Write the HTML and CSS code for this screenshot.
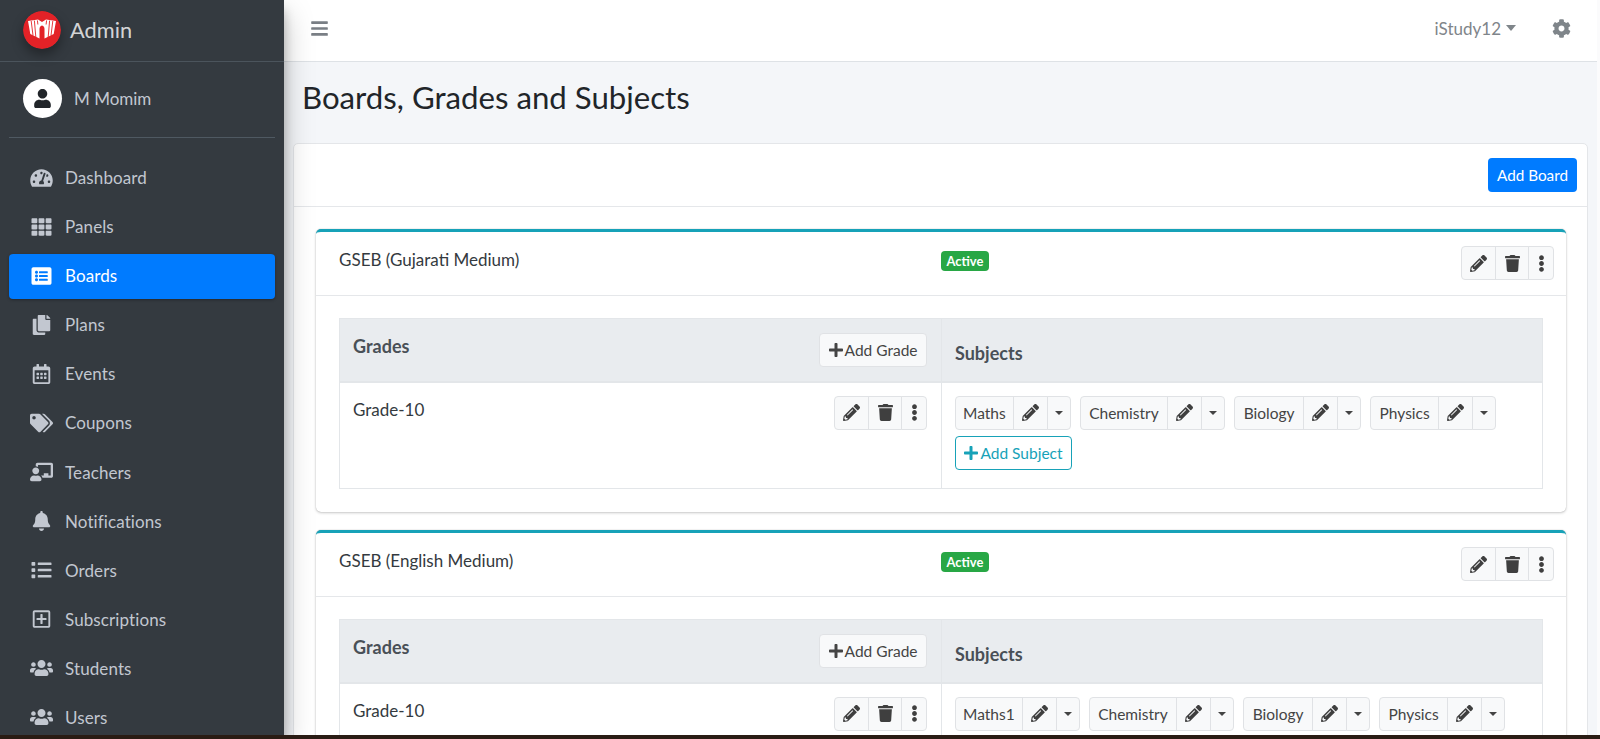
FILE: index.html
```html
<!DOCTYPE html>
<html lang="en">
<head>
<meta charset="utf-8">
<title>Boards, Grades and Subjects</title>
<link rel="stylesheet" href="styles.css">
</head>
<body>
<svg class="sprite" xmlns="http://www.w3.org/2000/svg">
<symbol id="i-pencil" viewBox="0 0 512 512"><path d="M497.9 142.1l-46.1 46.1c-4.7 4.7-12.3 4.7-17 0l-111-111c-4.7-4.7-4.7-12.3 0-17l46.1-46.1c18.7-18.7 49.1-18.7 67.9 0l60.1 60.1c18.8 18.7 18.8 49.1 0 67.9zM284.2 99.8L21.6 362.4.4 483.9c-2.9 16.4 11.4 30.6 27.8 27.8l121.5-21.3 262.6-262.6c4.7-4.7 4.7-12.3 0-17l-111-111c-4.8-4.7-12.4-4.7-17.1 0zM124.1 339.9c-5.5-5.5-5.5-14.3 0-19.8l154-154c5.5-5.5 14.3-5.5 19.8 0s5.5 14.3 0 19.8l-154 154c-5.5 5.5-14.3 5.5-19.8 0zM88 424h48v36.3l-64.5 11.3-31.1-31.1L51.7 376H88v48z"/></symbol>
<symbol id="i-trash" viewBox="0 0 448 512"><path d="M432 32H312l-9.4-18.7A24 24 0 0 0 281.1 0H166.8a23.72 23.72 0 0 0-21.4 13.3L136 32H16A16 16 0 0 0 0 48v32a16 16 0 0 0 16 16h416a16 16 0 0 0 16-16V48a16 16 0 0 0-16-16zM53.2 467a48 48 0 0 0 47.9 45h245.8a48 48 0 0 0 47.9-45L416 128H32z"/></symbol>
<symbol id="i-more" viewBox="0 0 192 512"><path d="M96 184c39.8 0 72 32.2 72 72s-32.2 72-72 72-72-32.2-72-72 32.2-72 72-72zM24 80c0 39.8 32.2 72 72 72s72-32.2 72-72S135.8 8 96 8 24 40.2 24 80zm0 352c0 39.8 32.2 72 72 72s72-32.2 72-72-32.2-72-72-72-72 32.2-72 72z"/></symbol>
<symbol id="i-plus" viewBox="0 0 448 512"><path d="M416 208H272V64c0-17.67-14.33-32-32-32h-32c-17.67 0-32 14.33-32 32v144H32c-17.67 0-32 14.33-32 32v32c0 17.67 14.33 32 32 32h144v144c0 17.67 14.33 32 32 32h32c17.67 0 32-14.33 32-32V304h144c17.67 0 32-14.33 32-32v-32c0-17.67-14.33-32-32-32z"/></symbol>
<symbol id="i-bars" viewBox="0 0 448 512"><path d="M16 132h416c8.837 0 16-7.163 16-16V76c0-8.837-7.163-16-16-16H16C7.163 60 0 67.163 0 76v40c0 8.837 7.163 16 16 16zm0 160h416c8.837 0 16-7.163 16-16v-40c0-8.837-7.163-16-16-16H16c-8.837 0-16 7.163-16 16v40c0 8.837 7.163 16 16 16zm0 160h416c8.837 0 16-7.163 16-16v-40c0-8.837-7.163-16-16-16H16c-8.837 0-16 7.163-16 16v40c0 8.837 7.163 16 16 16z"/></symbol>
<symbol id="i-cog" viewBox="0 0 512 512"><path d="M487.4 315.7l-42.6-24.6c4.3-23.2 4.3-47 0-70.2l42.6-24.6c4.9-2.8 7.1-8.6 5.5-14-11.1-35.6-30-67.8-54.7-94.6-3.8-4.1-10-5.1-14.8-2.3L380.8 110c-17.9-15.4-38.5-27.3-60.8-35.1V25.8c0-5.6-3.9-10.5-9.4-11.7-36.7-8.2-74.3-7.8-109.2 0-5.5 1.2-9.4 6.1-9.4 11.7V75c-22.2 7.9-42.8 19.8-60.8 35.1L88.7 85.5c-4.9-2.8-11-1.9-14.8 2.3-24.7 26.7-43.6 58.9-54.7 94.6-1.7 5.4.6 11.2 5.5 14L67.3 221c-4.3 23.2-4.3 47 0 70.2l-42.6 24.6c-4.9 2.8-7.1 8.6-5.5 14 11.1 35.6 30 67.8 54.7 94.6 3.8 4.1 10 5.1 14.8 2.3l42.6-24.6c17.9 15.4 38.5 27.3 60.8 35.1v49.2c0 5.6 3.9 10.5 9.4 11.7 36.7 8.2 74.3 7.8 109.2 0 5.5-1.2 9.4-6.1 9.4-11.7v-49.2c22.2-7.9 42.8-19.8 60.8-35.1l42.6 24.6c4.9 2.8 11 1.9 14.8-2.3 24.7-26.7 43.6-58.9 54.7-94.6 1.5-5.5-.7-11.3-5.6-14.1zM256 336c-44.1 0-80-35.9-80-80s35.9-80 80-80 80 35.9 80 80-35.9 80-80 80z"/></symbol>
<symbol id="i-user" viewBox="0 0 448 512"><path d="M224 256c70.7 0 128-57.3 128-128S294.7 0 224 0 96 57.3 96 128s57.3 128 128 128zm89.6 32h-16.7c-22.2 10.2-46.9 16-72.9 16s-50.6-5.8-72.9-16h-16.7C60.2 288 0 348.2 0 422.4V464c0 26.5 21.5 48 48 48h352c26.5 0 48-21.5 48-48v-41.6c0-74.2-60.2-134.4-134.4-134.4z"/></symbol>
<symbol id="i-dash" viewBox="0 0 576 512"><path d="M288 32C128.94 32 0 160.94 0 320c0 52.8 14.25 102.26 39.06 144.8 5.61 9.62 16.3 15.2 27.44 15.2h443c11.14 0 21.83-5.58 27.44-15.2C561.75 422.26 576 372.8 576 320c0-159.06-128.94-288-288-288zm0 64c14.71 0 26.58 10.13 30.32 23.65-1.11 2.26-2.64 4.23-3.45 6.67l-9.22 27.67c-5.13 3.49-10.97 6.01-17.64 6.01-17.67 0-32-14.33-32-32S270.33 96 288 96zM96 384c-17.67 0-32-14.33-32-32s14.33-32 32-32 32 14.33 32 32-14.33 32-32 32zm48-160c-17.67 0-32-14.33-32-32s14.33-32 32-32 32 14.33 32 32-14.33 32-32 32zm246.77-72.41l-61.33 184C343.13 347.33 352 364.54 352 384c0 11.72-3.38 22.55-8.88 32H232.88c-5.5-9.45-8.88-20.28-8.88-32 0-33.94 26.5-61.43 59.9-63.59l61.34-184.01c4.17-12.56 17.73-19.45 30.36-15.17 12.57 4.19 19.35 17.79 15.17 30.36zm14.66 57.2l15.52-46.55c3.47-1.29 7.13-2.23 11.05-2.23 17.67 0 32 14.33 32 32s-14.33 32-32 32c-11.38-.01-20.89-6.28-26.57-15.22zM480 384c-17.67 0-32-14.33-32-32s14.33-32 32-32 32 14.33 32 32-14.33 32-32 32z"/></symbol>
<symbol id="i-th" viewBox="0 0 512 512"><path d="M149.333 56v80c0 13.255-10.745 24-24 24H24c-13.255 0-24-10.745-24-24V56c0-13.255 10.745-24 24-24h101.333c13.255 0 24 10.745 24 24zm181.334 240v-80c0-13.255-10.745-24-24-24H205.333c-13.255 0-24 10.745-24 24v80c0 13.255 10.745 24 24 24h101.333c13.256 0 24.001-10.745 24.001-24zm32-240v80c0 13.255 10.745 24 24 24H488c13.255 0 24-10.745 24-24V56c0-13.255-10.745-24-24-24H386.667c-13.255 0-24 10.745-24 24zm-32 80V56c0-13.255-10.745-24-24-24H205.333c-13.255 0-24 10.745-24 24v80c0 13.255 10.745 24 24 24h101.333c13.256 0 24.001-10.745 24.001-24zm-205.334 56H24c-13.255 0-24 10.745-24 24v80c0 13.255 10.745 24 24 24h101.333c13.255 0 24-10.745 24-24v-80c0-13.255-10.745-24-24-24zM0 376v80c0 13.255 10.745 24 24 24h101.333c13.255 0 24-10.745 24-24v-80c0-13.255-10.745-24-24-24H24c-13.255 0-24 10.745-24 24zm386.667-56H488c13.255 0 24-10.745 24-24v-80c0-13.255-10.745-24-24-24H386.667c-13.255 0-24 10.745-24 24v80c0 13.255 10.745 24 24 24zm0 160H488c13.255 0 24-10.745 24-24v-80c0-13.255-10.745-24-24-24H386.667c-13.255 0-24 10.745-24 24v80c0 13.255 10.745 24 24 24zM181.333 376v80c0 13.255 10.745 24 24 24h101.333c13.255 0 24-10.745 24-24v-80c0-13.255-10.745-24-24-24H205.333c-13.255 0-24 10.745-24 24z"/></symbol>
<symbol id="i-listalt" viewBox="0 0 512 512"><path d="M464 480H48c-26.51 0-48-21.49-48-48V80c0-26.51 21.49-48 48-48h416c26.51 0 48 21.49 48 48v352c0 26.51-21.49 48-48 48zM128 120c-22.091 0-40 17.909-40 40s17.909 40 40 40 40-17.909 40-40-17.909-40-40-40zm0 96c-22.091 0-40 17.909-40 40s17.909 40 40 40 40-17.909 40-40-17.909-40-40-40zm0 96c-22.091 0-40 17.909-40 40s17.909 40 40 40 40-17.909 40-40-17.909-40-40-40zm288-136v-32c0-6.627-5.373-12-12-12H204c-6.627 0-12 5.373-12 12v32c0 6.627 5.373 12 12 12h200c6.627 0 12-5.373 12-12zm0 96v-32c0-6.627-5.373-12-12-12H204c-6.627 0-12 5.373-12 12v32c0 6.627 5.373 12 12 12h200c6.627 0 12-5.373 12-12zm0 96v-32c0-6.627-5.373-12-12-12H204c-6.627 0-12 5.373-12 12v32c0 6.627 5.373 12 12 12h200c6.627 0 12-5.373 12-12z"/></symbol>
<symbol id="i-copy" viewBox="0 0 448 512"><path d="M320 448v40c0 13.255-10.745 24-24 24H24c-13.255 0-24-10.745-24-24V120c0-13.255 10.745-24 24-24h72v296c0 30.879 25.121 56 56 56h168zm0-344V0H152c-13.255 0-24 10.745-24 24v368c0 13.255 10.745 24 24 24h272c13.255 0 24-10.745 24-24V128H344c-13.2 0-24-10.8-24-24zm120.971-31.029L375.029 7.029A24 24 0 0 0 358.059 0H352v96h96v-6.059a24 24 0 0 0-7.029-16.97z"/></symbol>
<symbol id="i-cal" viewBox="0 0 448 512"><path d="M148 288h-40c-6.6 0-12-5.4-12-12v-40c0-6.6 5.4-12 12-12h40c6.6 0 12 5.4 12 12v40c0 6.6-5.4 12-12 12zm108-12v-40c0-6.6-5.4-12-12-12h-40c-6.6 0-12 5.4-12 12v40c0 6.6 5.4 12 12 12h40c6.6 0 12-5.4 12-12zm96 0v-40c0-6.6-5.4-12-12-12h-40c-6.6 0-12 5.4-12 12v40c0 6.6 5.4 12 12 12h40c6.6 0 12-5.4 12-12zm-96 96v-40c0-6.6-5.4-12-12-12h-40c-6.6 0-12 5.4-12 12v40c0 6.6 5.4 12 12 12h40c6.6 0 12-5.4 12-12zm-96 0v-40c0-6.6-5.4-12-12-12h-40c-6.6 0-12 5.4-12 12v40c0 6.6 5.4 12 12 12h40c6.6 0 12-5.4 12-12zm192 0v-40c0-6.6-5.4-12-12-12h-40c-6.6 0-12 5.4-12 12v40c0 6.6 5.4 12 12 12h40c6.6 0 12-5.4 12-12zm96-260v352c0 26.5-21.5 48-48 48H48c-26.5 0-48-21.5-48-48V112c0-26.5 21.5-48 48-48h48V12c0-6.6 5.4-12 12-12h40c6.6 0 12 5.4 12 12v52h128V12c0-6.6 5.4-12 12-12h40c6.6 0 12 5.4 12 12v52h48c26.5 0 48 21.5 48 48zm-48 346V160H48v298c0 3.3 2.7 6 6 6h340c3.3 0 6-2.7 6-6z"/></symbol>
<symbol id="i-tags" viewBox="0 0 640 512"><path d="M497.941 225.941L286.059 14.059A48 48 0 0 0 252.118 0H48C21.49 0 0 21.49 0 48v204.118a48 48 0 0 0 14.059 33.941l211.882 211.882c18.744 18.745 49.136 18.746 67.882 0l204.118-204.118c18.745-18.745 18.745-49.137 0-67.882zM112 160c-26.51 0-48-21.49-48-48s21.49-48 48-48 48 21.49 48 48-21.49 48-48 48zm513.941 133.823L421.823 497.941c-18.745 18.745-49.137 18.745-67.882 0l-.36-.36L527.64 323.522c16.999-16.999 26.36-39.6 26.36-63.64s-9.362-46.641-26.36-63.64L331.397 0h48.721a48 48 0 0 1 33.941 14.059l211.882 211.882c18.745 18.745 18.745 49.137 0 67.882z"/></symbol>
<symbol id="i-teacher" viewBox="0 0 640 512"><path d="M208 352c-2.39 0-4.78.35-7.06 1.09C187.98 357.3 174.35 360 160 360c-14.35 0-27.98-2.7-40.95-6.91-2.28-.74-4.66-1.09-7.05-1.09C49.94 352-.33 402.48 0 464.62.14 490.88 21.73 512 48 512h224c26.27 0 47.86-21.12 48-47.38.33-62.14-49.94-112.62-112-112.62zm-48-32c53.02 0 96-42.98 96-96s-42.98-96-96-96-96 42.98-96 96 42.98 96 96 96zM592 0H208c-26.47 0-48 22.25-48 49.59V96c23.42 0 45.1 6.78 64 17.8V64h352v288h-64v-64H384v64h-76.24c19.1 16.69 33.12 38.73 39.69 64H592c26.47 0 48-22.25 48-49.59V49.59C640 22.25 618.47 0 592 0z"/></symbol>
<symbol id="i-bell" viewBox="0 0 448 512"><path d="M224 512c35.32 0 63.97-28.65 63.97-64H160.03c0 35.35 28.65 64 63.97 64zm215.39-149.71c-19.32-20.76-55.47-51.99-55.47-154.29 0-77.7-54.48-139.9-127.94-155.16V32c0-17.67-14.32-32-31.98-32s-31.98 14.33-31.98 32v20.84C118.56 68.1 64.08 130.3 64.08 208c0 102.3-36.15 133.53-55.47 154.29-6 6.45-8.66 14.16-8.61 21.71.11 16.4 12.98 32 32.1 32h383.8c19.12 0 32-15.6 32.1-32 .05-7.55-2.61-15.27-8.61-21.71z"/></symbol>
<symbol id="i-list" viewBox="0 0 512 512"><path d="M80 368H16a16 16 0 0 0-16 16v64a16 16 0 0 0 16 16h64a16 16 0 0 0 16-16v-64a16 16 0 0 0-16-16zm0-320H16A16 16 0 0 0 0 64v64a16 16 0 0 0 16 16h64a16 16 0 0 0 16-16V64a16 16 0 0 0-16-16zm0 160H16a16 16 0 0 0-16 16v64a16 16 0 0 0 16 16h64a16 16 0 0 0 16-16v-64a16 16 0 0 0-16-16zm416 176H176a16 16 0 0 0-16 16v32a16 16 0 0 0 16 16h320a16 16 0 0 0 16-16v-32a16 16 0 0 0-16-16zm0-320H176a16 16 0 0 0-16 16v32a16 16 0 0 0 16 16h320a16 16 0 0 0 16-16V80a16 16 0 0 0-16-16zm0 160H176a16 16 0 0 0-16 16v32a16 16 0 0 0 16 16h320a16 16 0 0 0 16-16v-32a16 16 0 0 0-16-16z"/></symbol>
<symbol id="i-plussq" viewBox="0 0 448 512"><path d="M352 240v32c0 6.6-5.4 12-12 12h-88v88c0 6.6-5.4 12-12 12h-32c-6.6 0-12-5.4-12-12v-88h-88c-6.6 0-12-5.4-12-12v-32c0-6.6 5.4-12 12-12h88v-88c0-6.6 5.4-12 12-12h32c6.6 0 12 5.4 12 12v88h88c6.6 0 12 5.4 12 12zm96-160v352c0 26.5-21.5 48-48 48H48c-26.5 0-48-21.5-48-48V80c0-26.5 21.5-48 48-48h352c26.5 0 48 21.5 48 48zm-48 346V86c0-3.3-2.7-6-6-6H54c-3.3 0-6 2.7-6 6v340c0 3.3 2.7 6 6 6h340c3.3 0 6-2.7 6-6z"/></symbol>
<symbol id="i-users" viewBox="0 0 640 512"><path d="M96 224c35.3 0 64-28.7 64-64s-28.7-64-64-64-64 28.7-64 64 28.7 64 64 64zm448 0c35.3 0 64-28.7 64-64s-28.7-64-64-64-64 28.7-64 64 28.7 64 64 64zm32 32h-64c-17.6 0-33.5 7.1-45.1 18.6 40.3 22.1 68.9 62 75.1 109.4h66c17.7 0 32-14.3 32-32v-32c0-35.3-28.7-64-64-64zm-256 0c61.9 0 112-50.1 112-112S381.9 32 320 32 208 82.1 208 144s50.1 112 112 112zm76.8 32h-8.3c-20.8 10-43.9 16-68.5 16s-47.6-6-68.5-16h-8.3C179.6 288 128 339.6 128 403.2V432c0 26.5 21.5 48 48 48h288c26.5 0 48-21.5 48-48v-28.8c0-63.6-51.6-115.2-115.2-115.2zm-223.7-13.4C161.5 263.1 145.6 256 128 256H64c-35.3 0-64 28.7-64 64v32c0 17.7 14.3 32 32 32h65.9c6.3-47.4 34.9-87.3 75.2-109.4z"/></symbol>
</svg>
<div class="screen">
  <aside class="sidebar">
    <div class="brand">
      <svg class="logo" viewBox="0 0 38 38" xmlns="http://www.w3.org/2000/svg">
        <circle cx="19" cy="19" r="19" fill="#e32227"/>
        <path fill="#fff" d="M5 10 L15 8.5 L19 11 L23 8.5 L33 10 L30.7 23 L21.5 27.5 L21.5 18 Q21.5 15 19 14.5 Q16.5 15 16.5 18 L16.5 27.5 L7.3 23 Z"/>
        <path fill="none" stroke="#e32227" stroke-width=".9" d="M8.2 10 L10 24.5 M11.4 9.6 L12.8 26 M14.4 9.4 L14.9 13.5 M29.8 10 L28 24.5 M26.6 9.6 L25.2 26 M23.6 9.4 L23.1 13.5"/>
      </svg>
      <span class="brand-text">Admin</span>
    </div>
    <div class="user-panel">
      <span class="avatar"><svg class="avatar-icon"><use href="#i-user"/></svg></span>
      <span class="user-name">M Momim</span>
    </div>
    <nav class="nav">
      <a class="nav-item"><svg class="nav-icon"><use href="#i-dash"/></svg><span>Dashboard</span></a>
      <a class="nav-item"><svg class="nav-icon"><use href="#i-th"/></svg><span>Panels</span></a>
      <a class="nav-item active"><svg class="nav-icon"><use href="#i-listalt"/></svg><span>Boards</span></a>
      <a class="nav-item"><svg class="nav-icon"><use href="#i-copy"/></svg><span>Plans</span></a>
      <a class="nav-item"><svg class="nav-icon"><use href="#i-cal"/></svg><span>Events</span></a>
      <a class="nav-item"><svg class="nav-icon"><use href="#i-tags"/></svg><span>Coupons</span></a>
      <a class="nav-item"><svg class="nav-icon"><use href="#i-teacher"/></svg><span>Teachers</span></a>
      <a class="nav-item"><svg class="nav-icon"><use href="#i-bell"/></svg><span>Notifications</span></a>
      <a class="nav-item"><svg class="nav-icon"><use href="#i-list"/></svg><span>Orders</span></a>
      <a class="nav-item"><svg class="nav-icon"><use href="#i-plussq"/></svg><span>Subscriptions</span></a>
      <a class="nav-item"><svg class="nav-icon"><use href="#i-users"/></svg><span>Students</span></a>
      <a class="nav-item"><svg class="nav-icon"><use href="#i-users"/></svg><span>Users</span></a>
    </nav>
  </aside>
  <main class="main">
    <header class="topbar">
      <svg class="bars"><use href="#i-bars"/></svg>
      <div class="top-right">
        <span class="account">iStudy12</span><span class="top-caret"></span>
        <svg class="gear"><use href="#i-cog"/></svg>
      </div>
    </header>
    <h1 class="page-title">Boards, Grades and Subjects</h1>
    <section class="outer-card">
      <div class="outer-head"><button class="btn-primary">Add Board</button></div>
      <div class="outer-body">
        <article class="board">
          <div class="board-head">
            <div class="board-name">GSEB (Gujarati Medium)</div>
            <span class="badge">Active</span>
            <div class="group board-actions">
              <span class="seg seg-edit"><svg class="ic"><use href="#i-pencil"/></svg></span>
              <span class="seg seg-del"><svg class="ic"><use href="#i-trash"/></svg></span>
              <span class="seg seg-more"><svg class="ic"><use href="#i-more"/></svg></span>
            </div>
          </div>
          <div class="board-body">
            <table class="tbl">
              <thead>
                <tr>
                  <th class="th-grades"><div class="th-row"><span class="th-label">Grades</span><span class="btn-add"><svg class="ic-plus"><use href="#i-plus"/></svg>Add Grade</span></div></th>
                  <th class="th-subjects">Subjects</th>
                </tr>
              </thead>
              <tbody>
                <tr>
                  <td class="td-grade"><div class="th-row"><span class="grade-name">Grade-10</span>
                    <div class="group">
                      <span class="seg seg-edit"><svg class="ic"><use href="#i-pencil"/></svg></span>
                      <span class="seg seg-del"><svg class="ic"><use href="#i-trash"/></svg></span>
                      <span class="seg seg-more"><svg class="ic"><use href="#i-more"/></svg></span>
                    </div></div>
                  </td>
                  <td class="td-subjects">
                    <div class="chips">
                      <div class="group"><span class="seg seg-label seg-tight">Maths</span><span class="seg seg-pen"><svg class="ic"><use href="#i-pencil"/></svg></span><span class="seg seg-drop"><span class="caret"></span></span></div>
                      <div class="group"><span class="seg seg-label">Chemistry</span><span class="seg seg-pen"><svg class="ic"><use href="#i-pencil"/></svg></span><span class="seg seg-drop"><span class="caret"></span></span></div>
                      <div class="group"><span class="seg seg-label">Biology</span><span class="seg seg-pen"><svg class="ic"><use href="#i-pencil"/></svg></span><span class="seg seg-drop"><span class="caret"></span></span></div>
                      <div class="group"><span class="seg seg-label">Physics</span><span class="seg seg-pen"><svg class="ic"><use href="#i-pencil"/></svg></span><span class="seg seg-drop"><span class="caret"></span></span></div>
                      <span class="btn-subject"><svg class="ic-plus"><use href="#i-plus"/></svg>Add Subject</span>
                    </div>
                  </td>
                </tr>
              </tbody>
            </table>
          </div>
        </article>
        <article class="board">
          <div class="board-head">
            <div class="board-name">GSEB (English Medium)</div>
            <span class="badge">Active</span>
            <div class="group board-actions">
              <span class="seg seg-edit"><svg class="ic"><use href="#i-pencil"/></svg></span>
              <span class="seg seg-del"><svg class="ic"><use href="#i-trash"/></svg></span>
              <span class="seg seg-more"><svg class="ic"><use href="#i-more"/></svg></span>
            </div>
          </div>
          <div class="board-body">
            <table class="tbl">
              <thead>
                <tr>
                  <th class="th-grades"><div class="th-row"><span class="th-label">Grades</span><span class="btn-add"><svg class="ic-plus"><use href="#i-plus"/></svg>Add Grade</span></div></th>
                  <th class="th-subjects">Subjects</th>
                </tr>
              </thead>
              <tbody>
                <tr>
                  <td class="td-grade"><div class="th-row"><span class="grade-name">Grade-10</span>
                    <div class="group">
                      <span class="seg seg-edit"><svg class="ic"><use href="#i-pencil"/></svg></span>
                      <span class="seg seg-del"><svg class="ic"><use href="#i-trash"/></svg></span>
                      <span class="seg seg-more"><svg class="ic"><use href="#i-more"/></svg></span>
                    </div></div>
                  </td>
                  <td class="td-subjects">
                    <div class="chips">
                      <div class="group"><span class="seg seg-label seg-tight">Maths1</span><span class="seg seg-pen"><svg class="ic"><use href="#i-pencil"/></svg></span><span class="seg seg-drop"><span class="caret"></span></span></div>
                      <div class="group"><span class="seg seg-label">Chemistry</span><span class="seg seg-pen"><svg class="ic"><use href="#i-pencil"/></svg></span><span class="seg seg-drop"><span class="caret"></span></span></div>
                      <div class="group"><span class="seg seg-label">Biology</span><span class="seg seg-pen"><svg class="ic"><use href="#i-pencil"/></svg></span><span class="seg seg-drop"><span class="caret"></span></span></div>
                      <div class="group"><span class="seg seg-label">Physics</span><span class="seg seg-pen"><svg class="ic"><use href="#i-pencil"/></svg></span><span class="seg seg-drop"><span class="caret"></span></span></div>
                    </div>
                  </td>
                </tr>
              </tbody>
            </table>
          </div>
        </article>
      </div>
    </section>
  </main>
</div>
<div class="strip"></div>
</body>
</html>
```
FILE: styles.css
```css
* { box-sizing: border-box; }
html, body { margin: 0; height: 739px; overflow: hidden; }
body {
  font-family: "Lato", "Noto Sans", sans-serif;
  font-size: 17px;
  color: #212529;
  background: #fafafa;
}
.sprite { display: none; }
.screen {
  display: flex;
  height: 735px;
  overflow: hidden;
  padding-right: 3px;
  background: #fbfbfc;
}
.strip { height: 4px; background: #2a1c14; }

/* sidebar */
.sidebar {
  position: relative;
  z-index: 2;
  flex: 0 0 284px;
  background: #343a40;
  overflow: hidden;
  box-shadow: 0 14px 28px rgba(0,0,0,.25), 0 10px 10px rgba(0,0,0,.22);
}
.brand {
  display: flex;
  align-items: center;
  height: 62px;
  padding: 0 0 1px 23px;
  border-bottom: 1px solid #4b545c;
}
.logo { width: 38px; height: 38px; border-radius: 50%; box-shadow: 0 6px 12px rgba(0,0,0,.35); }
.brand-text { margin: 0 0 2px 9px; font-size: 21.8px; color: rgba(255,255,255,.8); }
.user-panel {
  display: flex;
  align-items: center;
  height: 76px;
  margin: 0 9px;
  padding: 0 0 3px 14px;
  border-bottom: 1px solid #4f5962;
}
.avatar {
  display: flex;
  align-items: center;
  justify-content: center;
  width: 39px;
  height: 39px;
  border-radius: 50%;
  background: #fff;
}
.avatar-icon { width: 17px; height: 19px; fill: #212529; }
.user-name { margin-left: 12px; color: #c2c7d0; }
.nav { display: flex; flex-direction: column; gap: 3.55px; margin: 17.5px 9px 0; letter-spacing: .1px; }
.nav-item {
  display: flex;
  align-items: center;
  flex: 0 0 45.5px;
  padding: 0 0 1px 21px;
  border-radius: 4px;
  color: #c2c7d0;
}
.nav-item.active { background: #007bff; color: #fff; box-shadow: 0 1px 3px rgba(0,0,0,.3); }
.nav-icon { width: 23px; height: 20px; margin-right: 12px; fill: currentColor; flex: none; }

/* main */
.main { flex: 1; min-width: 0; background: #f4f6f9; overflow: hidden; }
.topbar {
  display: flex;
  align-items: center;
  justify-content: space-between;
  height: 62px;
  padding: 0 26px 5px 27px;
  background: #fff;
  border-bottom: 1px solid #dee2e6;
}
.bars { width: 17px; height: 19px; fill: #7a7f85; }
.top-right { display: flex; align-items: center; color: #7f858a; }
.account { font-size: 17px; }
.top-caret {
  margin: 0 0 0 5px;
  border-top: 6px solid #7f858a;
  border-left: 5.5px solid transparent;
  border-right: 5.5px solid transparent;
}
.gear { width: 19px; height: 19px; margin-left: 36px; fill: #7f858a; }
.page-title {
  margin: 0;
  height: 81px;
  padding: 0 0 11px 18px;
  display: flex;
  align-items: center;
  font-size: 31.2px;
  font-weight: 400;
  color: #212529;
}
.outer-card {
  margin: 0 9px;
  background: #fff;
  border: 1px solid #e4e6e9;
  border-radius: 5px 5px 0 0;
}
.outer-head {
  display: flex;
  justify-content: flex-end;
  height: 63px;
  padding: 14px 10px 0 0;
  border-bottom: 1px solid #e5e7ea;
}
.btn-primary {
  height: 34px;
  width: 89px;
  padding: 0;
  border: 0;
  border-radius: 4px;
  background: #007bff;
  color: #fff;
  font: inherit;
  font-size: 15.3px;
}
.outer-body { padding: 22px 21px 0 22px; }
.board {
  margin-bottom: 18px;
  background: #fff;
  border-top: 3px solid #17a2b8;
  border-radius: 5px;
  box-shadow: 0 0 1px rgba(0,0,0,.3), 0 1px 3px rgba(0,0,0,.2);
}
.board-head {
  display: flex;
  align-items: flex-start;
  height: 64px;
  padding: 14px 12px 0 23px;
  border-bottom: 1px solid #e5e7ea;
}
.board-name { flex: 0 0 602px; padding-top: 3px; color: #343a40; font-size: 17px; }
.badge {
  margin-top: 5px;
  padding: 0 5.5px;
  height: 20px;
  line-height: 20px;
  border-radius: 4px;
  background: #28a745;
  color: #fff;
  font-size: 12.9px;
  font-weight: 700;
}
.board-actions { margin-left: auto; }
.board-body { padding: 22px 23px 23px; }

.group { display: inline-flex; height: 34px; }
.seg {
  display: flex;
  align-items: center;
  justify-content: center;
  margin-left: -1px;
  background: #f8f9fa;
  border: 1px solid #e0e2e5;
  color: #444;
  font-size: 15.5px;
}
.seg:first-child { margin-left: 0; border-radius: 4px 0 0 4px; }
.seg:last-child { border-radius: 0 4px 4px 0; }
.seg-edit { width: 35px; }
.seg-del { width: 34px; }
.seg-more { width: 26px; }
.seg-label { padding: 1px 8.5px 0; white-space: nowrap; }
.seg-tight { padding-left: 7px; padding-right: 7px; }
.seg-pen { width: 35px; }
.seg-drop { width: 24px; }
.ic { width: 17px; height: 17px; fill: #3f3f3f; }
.caret {
  border-top: 4.5px solid #444;
  border-left: 4.5px solid transparent;
  border-right: 4.5px solid transparent;
}

.tbl { width: 100%; table-layout: fixed; border-collapse: collapse; }
.tbl th, .tbl td { border: 1px solid #e3e6e9; text-align: left; }
.tbl thead th { background: #e9ecef; height: 63px; border-bottom-width: 2px; color: #495057; }
.th-grades { width: 602px; padding: 14px 14px 0 13px; vertical-align: top; }
.tbl thead .th-subjects { padding: 7px 13px 0; font-size: 18px; vertical-align: middle; }
.th-row { display: flex; justify-content: space-between; align-items: flex-start; }
.th-label { padding-top: 2px; font-size: 18px; }
.btn-add, .btn-subject {
  display: inline-flex;
  align-items: center;
  height: 34px;
  padding: 0 8.5px;
  border-radius: 4px;
  font-size: 15.5px;
  font-weight: 400;
}
.btn-add { background: #f8f9fa; border: 1px solid #e0e2e5; color: #444; }
.btn-subject { width: 117px; background: #fff; border: 1px solid #17a2b8; color: #17a2b8; justify-content: center; padding: 0; }
.ic-plus { width: 14px; height: 16px; margin-right: 2px; fill: currentColor; }
.td-grade { height: 107px; padding: 13px 14px 0 13px; vertical-align: top; }
.grade-name { padding-top: 3px; color: #343a40; }
.td-subjects { padding: 13px 13px 0; vertical-align: top; }
.chips { display: flex; flex-wrap: wrap; gap: 6px 9px; }
```
